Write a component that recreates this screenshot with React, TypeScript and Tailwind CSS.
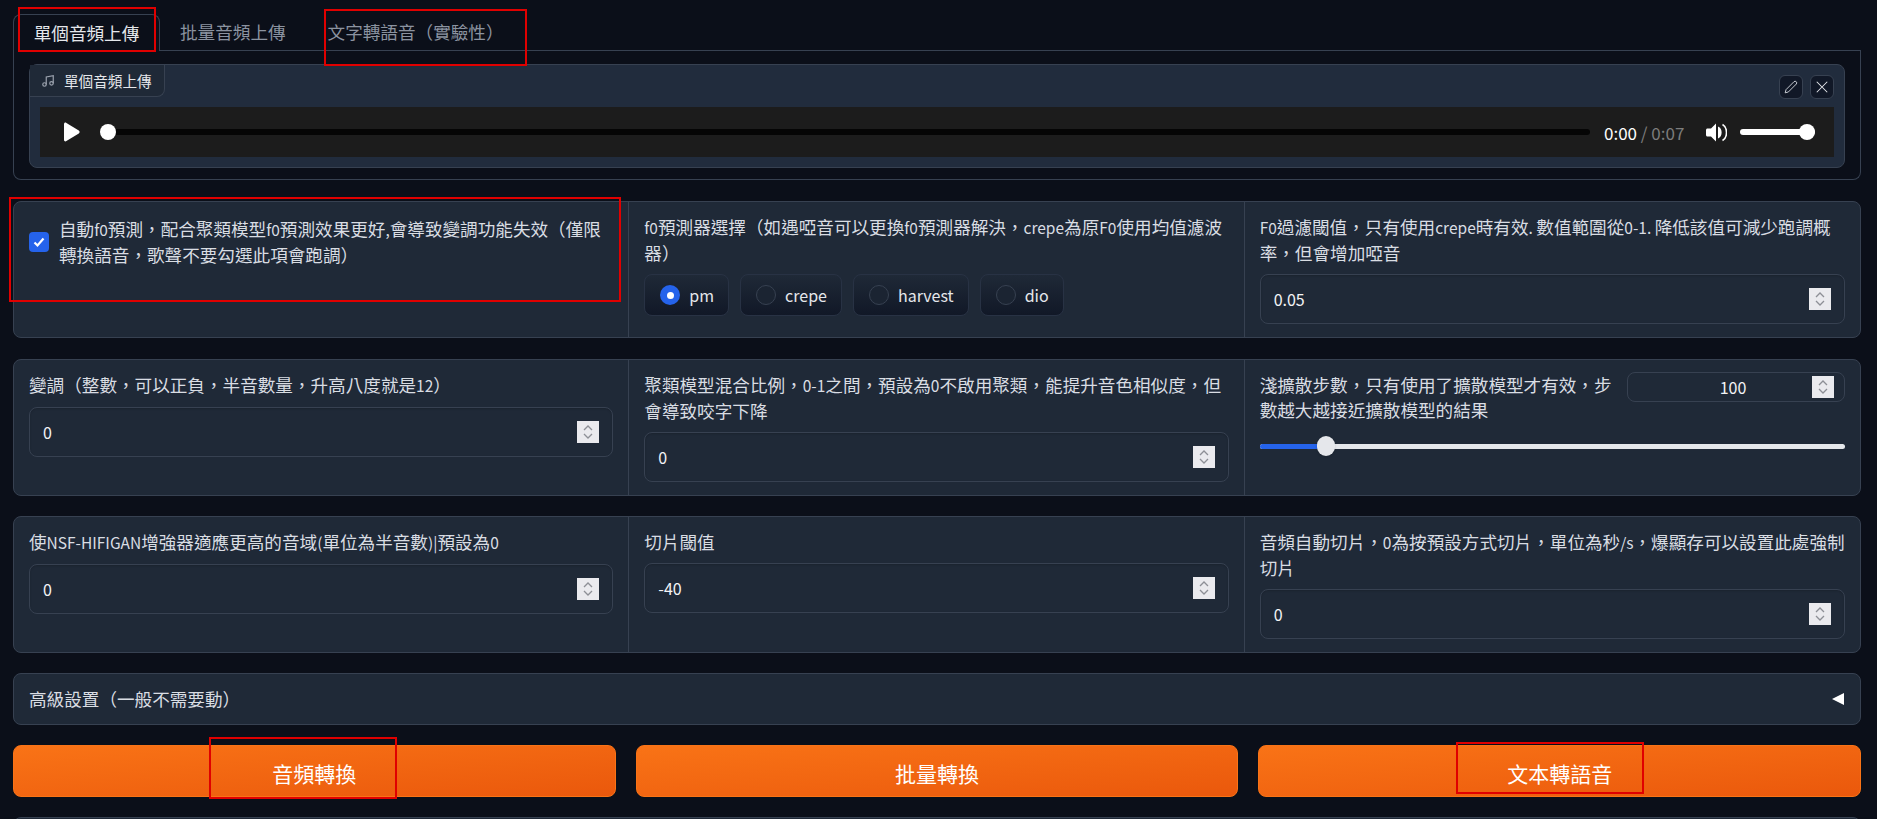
const font = { fontFamily: '"Noto Sans CJK TC", "Noto Sans", sans-serif' };

const Spinner = ({ className = "" }: { className?: string }) => (
    <div className={`absolute flex h-[22px] w-[22px] items-center justify-center bg-[#eaeaee] ${className}`}>
        <svg width="12" height="18" viewBox="0 0 12 18" fill="none" stroke="#8d8f96" strokeWidth="1.3">
            <path d="M2 7l4-4 4 4" />
            <path d="M2 11l4 4 4-4" />
        </svg>
    </div>
);

const NumberBox = ({ value }: { value: string }) => (
    <div className="relative flex h-[50px] items-center rounded-lg border border-[#374151] bg-[#1f2937] pl-[13px] text-[16px] text-[#f3f4f6] shadow-[inset_0_1px_2px_rgba(0,0,0,0.15)]">
        {value}
        <Spinner className="right-[13px] top-[13px]" />
    </div>
);

// latin runs sit a bit smaller next to the CJK glyphs
const Label = ({ text }: { text: string }) => (
    <div className="text-[17.6px] leading-[25px] text-[#d9dde3]">
        {text.split(/([A-Za-z0-9.,\-|()/ ]+)/).map((part, i) =>
            i % 2 ? (
                <span key={i} className="text-[15.5px]">
                    {part}
                </span>
            ) : (
                part
            )
        )}
    </div>
);

const Radio = ({ name, on }: { name: string; on?: boolean }) => (
    <div className="flex h-[42px] items-center gap-[9px] rounded-lg border border-[#283244] bg-gradient-to-b from-[#1f2937] to-[#111827] pl-[15px] pr-[14px] text-[16px] text-[#e5e7eb]">
        {on ? (
            <span className="flex h-5 w-5 items-center justify-center rounded-full bg-[#2563eb]">
                <span className="h-[7px] w-[7px] rounded-full bg-white" />
            </span>
        ) : (
            <span className="h-5 w-5 rounded-full border border-[#374151] bg-[#1b2432]" />
        )}
        {name}
    </div>
);

const Row = ({ children }: { children: React.ReactNode }) => (
    <div className="grid h-[137px] grid-cols-3 divide-x divide-[#374151] rounded-lg border border-[#374151] bg-[#1f2937]">
        {children}
    </div>
);

const Cell = ({ children }: { children: React.ReactNode }) => (
    <div className="flex flex-col px-[15px] pt-[12px]">{children}</div>
);

const Field = ({ label, value }: { label: string; value: string }) => (
    <Cell>
        <Label text={label} />
        <div className="mt-[9px]">
            <NumberBox value={value} />
        </div>
    </Cell>
);

const Mark = ({ className }: { className: string }) => (
    <div className={`pointer-events-none absolute border-2 border-[#e00000] ${className}`} />
);

const OrangeButton = ({ text }: { text: string }) => (
    <button className="flex h-[52px] items-center justify-center rounded-lg border border-[#f97316] bg-gradient-to-br from-[#f97316] to-[#ea580c] pt-[6px] text-[21px] text-white">
        {text}
    </button>
);

export default function App() {
    return (
        <div className="relative h-screen overflow-hidden bg-[#0b0f19] pl-[13px] pr-[16px] pt-[14px]" style={font}>
            {/* tabs */}
            <div className="flex h-[37px] items-stretch text-[17.6px]">
                <div className="flex w-[147px] items-center justify-center rounded-t-lg border border-b-0 border-[#374151] bg-[#0b0f19] text-[#e5e7eb]">
                    單個音頻上傳
                </div>
                <div className="flex flex-1 border-b border-[#374151] text-[#8b93a0]">
                    <div className="flex items-center px-5">批量音頻上傳</div>
                    <div className="ml-[2px] flex items-center px-5">文字轉語音（實驗性）</div>
                </div>
            </div>

            <div className="h-[129px] rounded-b-lg border border-t-0 border-[#374151] px-[15px] pt-[13px]">
                <div className="relative h-[104px] rounded-lg border border-[#374151] bg-[#212c3d]">
                    <div className="flex h-8 w-[135px] items-center gap-[9px] rounded-br-lg border-b border-r border-[#374151] bg-[#1f2937] pl-[11px] text-[14.6px] text-[#e5e7eb]">
                        <svg width="14" height="14" viewBox="0 0 24 24" fill="none" stroke="#9ca3af" strokeWidth="2">
                            <path d="M9 18V5l12-2v13" />
                            <circle cx="6" cy="18" r="3" />
                            <circle cx="18" cy="16" r="3" />
                        </svg>
                        單個音頻上傳
                    </div>
                    <div className="absolute right-[10px] top-[10px] flex gap-[7px]">
                        <div className="flex h-[24px] w-[24px] items-center justify-center rounded-md border border-[#374151] bg-[#111827]">
                            <svg width="14" height="14" viewBox="0 0 24 24" fill="none" stroke="#d1d5db" strokeWidth="1.6">
                                <path d="M17 3a2.8 2.8 0 0 1 4 4L7.5 20.5 2 22l1.5-5.5L17 3z" />
                            </svg>
                        </div>
                        <div className="flex h-[24px] w-[24px] items-center justify-center rounded-md border border-[#374151] bg-[#111827]">
                            <svg width="14" height="14" viewBox="0 0 24 24" fill="none" stroke="#e5e7eb" strokeWidth="1.8">
                                <path d="M3 3l18 18M21 3L3 21" />
                            </svg>
                        </div>
                    </div>
                    <div className="mx-[10px] mt-[10px] flex h-[50px] items-center bg-[#1c1c1c] pl-[23px] pr-[18px]">
                        <svg width="17" height="20" viewBox="0 0 17 20" fill="white">
                            <path d="M1 2.2C1 .8 2.3.2 3.4.9l12.4 7.6c1.1.7 1.1 2.3 0 3L3.4 19.1C2.3 19.8 1 19.2 1 17.800z" />
                        </svg>
                        <div className="relative ml-[20px] h-[6px] w-[1490px] rounded-full bg-[#050505]">
                            <div className="absolute left-0 top-[-5px] h-4 w-4 rounded-full bg-white" />
                        </div>
                        <div className="ml-[14px] w-[100px] text-[17px] leading-none">
                            <span className="text-white">0:00</span>
                            <span className="text-[#7d7d7d]"> / 0:07</span>
                        </div>
                        <svg className="ml-[2px]" width="21" height="19" viewBox="0 0 21 19" fill="white">
                            <path d="M10 .5v18L5 13.500H1.500C.7 13.500 0 12.800 0 12V7c0-.8.7-1.500 1.500-1.500H5z" />
                            <path d="M12 3.500c2.400 1 3.600 3.200 3.600 6s-1.200 5-3.600 6z" />
                            <path d="M16.500 1.500c2.800 1.600 4 4.500 4 8s-1.200 6.400-4 8" fill="none" stroke="white" strokeWidth="1.6" />
                        </svg>
                        <div className="relative ml-[13px] h-[6px] w-[75px] rounded-full bg-white">
                            <div className="absolute right-0 top-[-5px] h-4 w-4 rounded-full bg-white" />
                        </div>
                    </div>
                </div>
            </div>

            {/* settings */}
            <div className="mt-[21px]">
                <Row>
                    <Cell>
                        <div className="mt-[2px] flex items-center gap-[10px]">
                            <span className="flex h-5 w-5 shrink-0 items-center justify-center rounded bg-[#2563eb]">
                                <svg width="12" height="12" viewBox="0 0 12 12" fill="none" stroke="white" strokeWidth="2.2">
                                    <path d="M1.500 6.500l3 3 6-7" />
                                </svg>
                            </span>
                            <Label text="自動f0預測，配合聚類模型f0預測效果更好,會導致變調功能失效（僅限轉換語音，歌聲不要勾選此項會跑調）" />
                        </div>
                    </Cell>
                    <Cell>
                        <Label text="f0預測器選擇（如遇啞音可以更換f0預測器解決，crepe為原F0使用均值濾波器）" />
                        <div className="mt-[9px] flex gap-[11px]">
                            <Radio name="pm" on />
                            <Radio name="crepe" />
                            <Radio name="harvest" />
                            <Radio name="dio" />
                        </div>
                    </Cell>
                    <Field label="F0過濾閾值，只有使用crepe時有效. 數值範圍從0-1. 降低該值可減少跑調概率，但會增加啞音" value="0.05" />
                </Row>
            </div>

            <div className="mt-[21px]">
                <Row>
                    <Field label="變調（整數，可以正負，半音數量，升高八度就是12）" value="0" />
                    <Field label="聚類模型混合比例，0-1之間，預設為0不啟用聚類，能提升音色相似度，但會導致咬字下降" value="0" />
                    <Cell>
                        <div className="flex justify-between gap-[12px]">
                            <Label text="淺擴散步數，只有使用了擴散模型才有效，步數越大越接近擴散模型的結果" />
                            <div className="relative flex h-[30px] w-[218px] shrink-0 items-center justify-center rounded-lg border border-[#374151] pr-[6px] text-[16px] text-[#f3f4f6]">
                                100
                                <Spinner className="right-[10px] top-[3px]" />
                            </div>
                        </div>
                        <div className="relative mt-[22px] h-[5px] rounded-full bg-[#e5e7eb]">
                            <div className="h-[5px] w-[66px] rounded-l-full bg-[#2563eb]" />
                            <div className="absolute left-[57px] top-[-8px] h-5 w-[18px] rounded-full bg-[#e5e7eb] shadow" />
                        </div>
                    </Cell>
                </Row>
            </div>

            <div className="mt-[20px]">
                <Row>
                    <Field label="使NSF-HIFIGAN增強器適應更高的音域(單位為半音數)|預設為0" value="0" />
                    <Field label="切片閾值" value="-40" />
                    <Field label="音頻自動切片，0為按預設方式切片，單位為秒/s，爆顯存可以設置此處強制切片" value="0" />
                </Row>
            </div>

            <div className="mt-[20px] flex h-[52px] items-center justify-between rounded-lg border border-[#374151] bg-[#1f2937] pl-[15px] pr-[15px] text-[17.6px] text-[#d9dde3]">
                高級設置（一般不需要動）
                <svg width="14" height="14" viewBox="0 0 14 14" fill="white">
                    <path d="M1 7l12-6v12z" />
                </svg>
            </div>

            <div className="mt-[20px] grid grid-cols-3 gap-5">
                <OrangeButton text="音頻轉換" />
                <OrangeButton text="批量轉換" />
                <OrangeButton text="文本轉語音" />
            </div>

            <div className="mt-[20px] h-8 rounded-t-lg border border-[#374151] bg-[#1f2937]" />

            {/* red annotations */}
            <Mark className="left-[18px] top-[7px] h-[45px] w-[138px]" />
            <Mark className="left-[324px] top-[9px] h-[57px] w-[203px]" />
            <Mark className="left-[9px] top-[197px] h-[105px] w-[612px]" />
            <Mark className="left-[209px] top-[737px] h-[62px] w-[188px]" />
            <Mark className="left-[1456px] top-[742px] h-[52px] w-[188px]" />
        </div>
    );
}
